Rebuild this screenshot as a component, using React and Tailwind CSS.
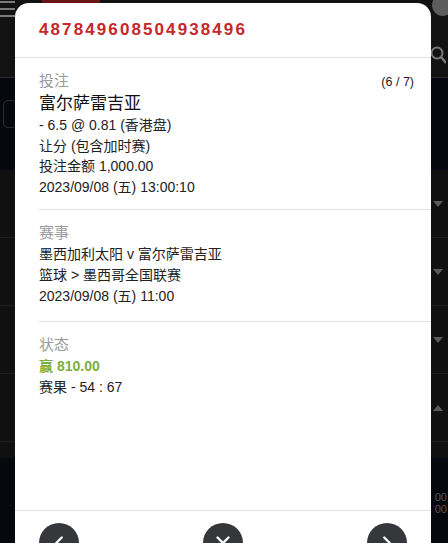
import { ChevronLeft, ChevronRight, X } from "lucide-react";

const font = { fontFamily: '"Liberation Sans", "Noto Sans CJK SC", sans-serif' };

function BgRow({ up }) {
  return (
    <div className="h-[68px] flex items-center border-b border-[#1d1d1d]">
      <svg width="10" height="6" viewBox="0 0 10 6" className="ml-auto mr-[5px]">
        <path d={up ? "M0 6 L10 6 L5 0 Z" : "M0 0 L10 0 L5 6 Z"} fill="#5a5a5a" />
      </svg>
    </div>
  );
}

function Section({ label, children, extra, last, pb }) {
  return (
    <div className={`ml-6 pt-[12px] ${last ? "" : "border-b border-[#e2e2e2]"} ${pb}`}>
      <div className="flex items-center justify-between pr-[17px]">
        <div className="text-[15px] leading-[22px] text-[#9a9a9a]">{label}</div>
        {extra && <div className="text-[12.5px] text-[#222] mt-[3px]">{extra}</div>}
      </div>
      {children}
    </div>
  );
}

export default function App() {
  return (
    <div className="relative w-[448px] h-[543px] overflow-hidden bg-[#06080d]" style={font}>
      {/* page behind the dialog */}
      <div className="h-[78px] bg-[#121212] border-b border-[#2c2c2c] relative">
        <div className="absolute left-0 top-0 flex flex-col gap-[5px] pt-[1px]">
          <div className="w-[15px] h-[2px] bg-[#7a7a7a]" />
          <div className="w-[15px] h-[2px] bg-[#7a7a7a]" />
          <div className="w-[15px] h-[2px] bg-[#7a7a7a]" />
        </div>
        <div className="absolute left-[42px] top-0 w-[58px] h-[4px] bg-[#6b1414]" />
        <div className="absolute right-[-6px] top-[-6px] w-[22px] h-[22px] rounded-full bg-[#5c5c5c]" />
        <svg className="absolute right-[2px] top-[46px]" width="16" height="20" viewBox="0 0 16 20">
          <circle cx="7" cy="7" r="5.5" stroke="#777" strokeWidth="2" fill="none" />
          <path d="M11 11 L16 17" stroke="#777" strokeWidth="2.5" />
        </svg>
      </div>
      <div className="h-[92px] relative">
        <div className="absolute left-[3px] top-[22px] w-[14px] h-[28px] rounded-[5px] border border-[#2a2d33]" />
      </div>
      <div className="bg-[#101010] pb-[16px]">
        <BgRow />
        <BgRow />
        <BgRow />
        <BgRow up />
      </div>
      <div className="flex flex-col items-end pt-[34px] text-[11px] leading-[11px] text-[#555] gap-[1px]">
        <span className="mr-[1px]">00</span>
        <span className="mr-[1px]">00</span>
      </div>

      {/* dialog */}
      <div className="absolute left-[15px] top-[3px] w-[416px] h-[600px] bg-white rounded-[14px] flex flex-col">
        <div className="h-[55px] border-b border-[#e2e2e2] flex items-center pl-6">
          <span className="text-[17px] font-bold tracking-[2.1px] text-[#c4282b]" style={{ fontFamily: '"Liberation Sans", Arial, sans-serif' }}>
            487849608504938496
          </span>
        </div>

        <Section label="投注" extra="(6 / 7)" pb="pb-[12px]">
          <div className="text-[17px] leading-[23px] text-[#111]">富尔萨雷吉亚</div>
          <div className="text-[14px] leading-[20.5px] text-[#222]">
            <div>- 6.5 @ 0.81 (香港盘)</div>
            <div>让分 (包含加时赛)</div>
            <div>投注金额 1,000.00</div>
            <div>2023/09/08 (五) 13:00:10</div>
          </div>
        </Section>

        <Section label="赛事" pb="pb-[14px]">
          <div className="text-[14px] leading-[21px] text-[#222]">
            <div>墨西加利太阳 v 富尔萨雷吉亚</div>
            <div>篮球 &gt; 墨西哥全国联赛</div>
            <div>2023/09/08 (五) 11:00</div>
          </div>
        </Section>

        <Section label="状态" last pb="">
          <div className="text-[14px] leading-[21px] text-[#222]">
            <div className="font-bold text-[#7cae3c]">赢 810.00</div>
            <div>赛果 - 54 : 67</div>
          </div>
        </Section>

        <div className="mt-[112px] border-t border-[#e2e2e2] pt-[12px] px-[4px] flex justify-between">
          <div className="ml-[20px] w-10 h-10 rounded-full bg-[#35373a] flex items-center justify-center">
            <ChevronLeft size={22} color="#fff" strokeWidth={2.5} />
          </div>
          <div className="w-10 h-10 rounded-full bg-[#35373a] flex items-center justify-center">
            <X size={22} color="#fff" strokeWidth={2.5} />
          </div>
          <div className="mr-[20px] w-10 h-10 rounded-full bg-[#35373a] flex items-center justify-center">
            <ChevronRight size={22} color="#fff" strokeWidth={2.5} />
          </div>
        </div>
      </div>
    </div>
  );
}
